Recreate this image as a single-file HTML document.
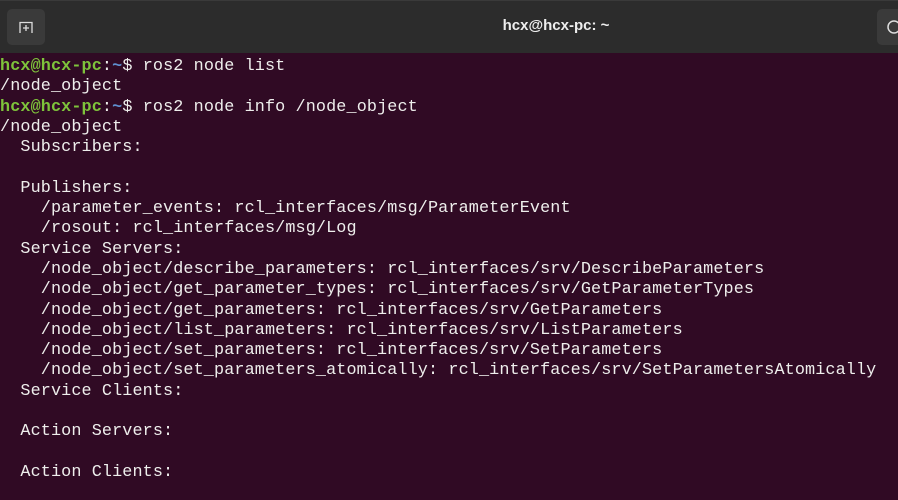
<!DOCTYPE html>
<html><head><meta charset="utf-8"><style>
html,body{margin:0;padding:0;width:898px;height:500px;overflow:hidden;background:#300a24}
.bar{position:absolute;left:0;top:0;width:898px;height:53px;background:#2c2c2c;border-top:1px solid #3a3a3a;box-sizing:border-box}
.btn{position:absolute;top:8px;width:38px;height:36px;background:#3a3a3a;border-radius:5px}
.title{position:absolute;top:16px;left:0;width:1112px;text-align:center;color:#eee;font:bold 15px "Liberation Sans",sans-serif}
pre{position:absolute;left:0;top:57px;margin:0;color:#eeeeec;font:16.8px/20.3px "Liberation Mono",monospace;letter-spacing:0.12px}
.g{color:#7ec33b;font-weight:bold}.b{color:#5f8fcf;font-weight:bold}
</style></head><body>
<div class="bar">
<div class="btn" style="left:7px"><svg width="38" height="36"><path d="M13 24V13.5h12V24" fill="none" stroke="#ddd" stroke-width="1.3"/><path d="M19 16v6M16 19h6" stroke="#ddd" stroke-width="1.3"/></svg></div>
<div class="title">hcx@hcx-pc: ~</div>
<div class="btn" style="left:877px"><svg width="38" height="36"><circle cx="17" cy="18" r="6" fill="none" stroke="#ddd" stroke-width="1.5"/></svg></div>
</div>
<pre><span class="g">hcx@hcx-pc</span>:<span class="b">~</span>$ ros2 node list
/node_object
<span class="g">hcx@hcx-pc</span>:<span class="b">~</span>$ ros2 node info /node_object
/node_object
  Subscribers:

  Publishers:
    /parameter_events: rcl_interfaces/msg/ParameterEvent
    /rosout: rcl_interfaces/msg/Log
  Service Servers:
    /node_object/describe_parameters: rcl_interfaces/srv/DescribeParameters
    /node_object/get_parameter_types: rcl_interfaces/srv/GetParameterTypes
    /node_object/get_parameters: rcl_interfaces/srv/GetParameters
    /node_object/list_parameters: rcl_interfaces/srv/ListParameters
    /node_object/set_parameters: rcl_interfaces/srv/SetParameters
    /node_object/set_parameters_atomically: rcl_interfaces/srv/SetParametersAtomically
  Service Clients:

  Action Servers:

  Action Clients:
</pre>
</body></html>
